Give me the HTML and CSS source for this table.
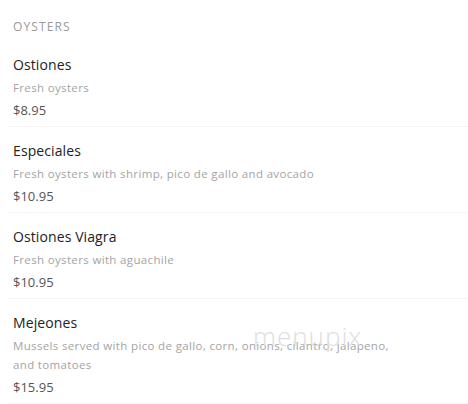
FILE: index.html
```html
<!DOCTYPE html>
<html lang="en">
<head>
    <meta charset="UTF-8">
    <meta name="viewport" content="width=device-width, initial-scale=1.0">
    <title>Menu - Oysters</title>
    <link rel="stylesheet" href="styles.css">
</head>
<body>
    <div class="menu">
        <h2 class="section-title">OYSTERS</h2>

        <ul class="items">
            <li class="item">
                <p class="item-name">Ostiones</p>
                <p class="item-desc">Fresh oysters</p>
                <p class="item-price">$8.95</p>
            </li>
            <li class="item">
                <p class="item-name">Especiales</p>
                <p class="item-desc">Fresh oysters with shrimp, pico de gallo and avocado</p>
                <p class="item-price">$10.95</p>
            </li>
            <li class="item">
                <p class="item-name">Ostiones Viagra</p>
                <p class="item-desc">Fresh oysters with aguachile</p>
                <p class="item-price">$10.95</p>
            </li>
            <li class="item">
                <p class="item-name">Mejeones</p>
                <p class="item-desc">Mussels served with pico de gallo, corn, onions, cilantro, jalapeno, and tomatoes</p>
                <p class="item-price">$15.95</p>
            </li>
        </ul>

        <div class="watermark">menupix</div>
    </div>
</body>
</html>
```

FILE: styles.css
```css
body {
    font-family: "Open Sans", Lato, sans-serif;
    background-color: #fff;
    margin: 0;
    padding: 0;
}

.menu {
    position: relative;
    padding: 17px 0 0 8px;
}

/* Section heading */
.section-title {
    margin: 0 0 16px 5px;
    font-size: 12px;
    font-weight: normal;
    line-height: 20px;
    letter-spacing: 1.1px;
    color: #9a9a9a;
}

/* Menu items */
.items {
    list-style: none;
    margin: 0;
    padding: 0;
}

.item {
    padding: 0 0 4px 5px;
    border-bottom: 1px solid #f4f4f4;
    margin-bottom: 12px;
}

.item p {
    margin: 0;
}

.item-name {
    font-size: 14px;
    line-height: 23px;
    color: #222;
    letter-spacing: 0.1px;
}

.item-desc {
    margin: 2px 0 !important;
    max-width: 395px;
    font-size: 11.5px;
    line-height: 19px;
    letter-spacing: 0.35px;
    color: #a4a4a4;
}

.item-price {
    font-size: 13px;
    line-height: 23px;
    color: #555;
}

/* Watermark over the list */
.watermark {
    position: absolute;
    left: 253px;
    top: 318px;
    font-size: 26px;
    font-weight: 300;
    letter-spacing: 1px;
    color: #dedede;
}
```
